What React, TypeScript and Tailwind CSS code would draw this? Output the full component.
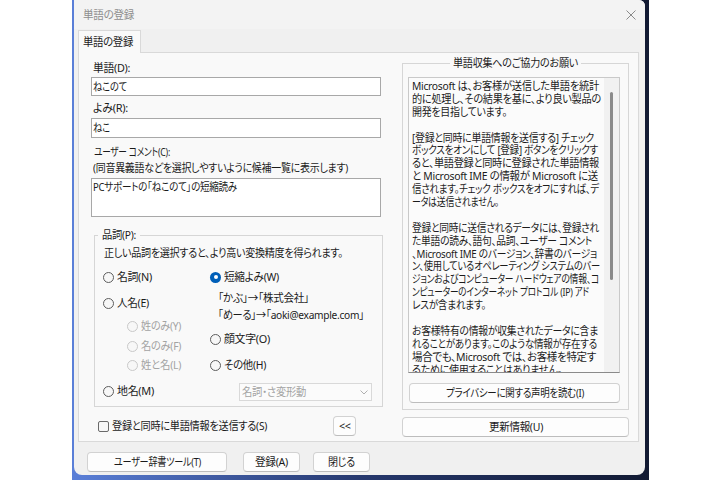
import React, { useLayoutEffect, useRef } from "react";

/* Text condensed at run time (scale computed from measurement) so that it takes
   the same width as the narrow UI font of the reference. */
function T({ w, children, className }: { w: number; children: React.ReactNode; className?: string }) {
  const inner = useRef<HTMLSpanElement>(null);
  useLayoutEffect(() => {
    const el = inner.current;
    if (!el) return;
    el.style.transform = "none";
    const nat = el.getBoundingClientRect().width;
    if (nat > 0) el.style.transform = `scaleX(${Math.min(1.08, w / nat)})`;
  }, [w]);
  return (
    <span className={"inline-block whitespace-nowrap " + (className ?? "")} style={{ width: w }}>
      <span ref={inner} className="inline-block origin-left tracking-[-0.3px]">
        {children}
      </span>
    </span>
  );
}

type RadioProps = { label: string; w: number; checked?: boolean; disabled?: boolean; className?: string };

function Radio({ label, w, checked, disabled, className }: RadioProps) {
  let circle = "w-[11px] h-[11px] rounded-full border border-[#5d5d5d] bg-[#f7f7f7] shrink-0";
  if (disabled) circle = "w-[11px] h-[11px] rounded-full border border-[#c9c9c9] bg-[#f7f7f7] shrink-0";
  if (checked) circle = "w-[11px] h-[11px] rounded-full bg-[#005fb8] shrink-0 flex items-center justify-center";
  return (
    <div className={"flex items-center h-[16px] gap-[3px] " + (className ?? "")}>
      <span className={circle}>{checked && <span className="w-[4px] h-[4px] rounded-full bg-white" />}</span>
      <T w={w} className={disabled ? "text-[#a3a3a3]" : ""}>
        {label}
      </T>
    </div>
  );
}

function Btn({ children, className }: { children: React.ReactNode; className?: string }) {
  return (
    <div
      className={
        "flex items-center justify-center h-[20px] rounded-[4px] border border-[#d2d2d2] border-b-[#bdbdbd] bg-[#fdfdfd] leading-[16px] " +
        (className ?? "")
      }
    >
      {children}
    </div>
  );
}

const infoLines: [string, number][][] = [
  [
    ["Microsoft は、お客様が送信した単語を統計", 187],
    ["的に処理し、その結果を基に、より良い製品の", 189],
    ["開発を目指しています。", 95],
  ],
  [
    ["[登録と同時に単語情報を送信する] チェック", 182],
    ["ボックスをオンにして [登録] ボタンをクリックす", 186],
    ["ると、単語登録と同時に登録された単語情報", 187],
    ["と Microsoft IME の情報が Microsoft に送", 186],
    ["信されます。チェック ボックスをオフにすれば、デ", 187],
    ["ータは送信されません。", 87],
  ],
  [
    ["登録と同時に送信されるデータには、登録され", 187],
    ["た単語の読み、語句、品詞、ユーザー コメント", 180],
    ["、Microsoft IME のバージョン、辞書のバージョ", 185],
    ["ン、使用しているオペレーティング システムのバー", 188],
    ["ジョンおよびコンピューター ハードウェアの情報、コ", 187],
    ["ンピューターのインターネット プロトコル (IP) アド", 177],
    ["レスが含まれます。", 74],
  ],
  [
    ["お客様特有の情報が収集されたデータに含ま", 186],
    ["れることがあります。このような情報が存在する", 185],
    ["場合でも、Microsoft では、お客様を特定す", 184],
    ["るために使用することはありません。", 150],
  ],
];

export default function App() {
  return (
    <div className="w-[720px] h-[480px] bg-white flex font-['Noto_Sans','Noto_Sans_CJK_JP',sans-serif] text-[11px] text-[#1b1b1b] [font-feature-settings:'palt']">
      <div className="ml-[72px] w-[577px] h-[480px] bg-gradient-to-r from-[#5a7fd8] via-[#26386e] to-[#121a33] pl-[2px]">
        <div className="w-[571px] h-[475px] bg-[#f0f0f0] rounded-b-[8px] rounded-tr-[6px] flex flex-col overflow-hidden">
          {/* Title bar */}
          <div className="h-[29px] bg-[#f3f3f3] flex items-center justify-between pl-[9px] pr-[9px] shrink-0 leading-[16px]">
            <T w={51} className="text-[#8e8e8e]">
              単語の登録
            </T>
            <svg width="10" height="10" viewBox="0 0 10 10">
              <path d="M0.5 0.5 L9.5 9.5 M9.5 0.5 L0.5 9.5" stroke="#8a8a8a" strokeWidth="1" fill="none" />
            </svg>
          </div>

          {/* Tab strip */}
          <div className="flex ml-[4px] mt-[1px]">
            <div className="relative z-10 -mb-px w-[63px] h-[23px] border border-b-0 border-[#d9d9d9] bg-[#f9f9f9] pl-[4px] pt-[3px] leading-[16px]">
              <T w={50}>単語の登録</T>
            </div>
          </div>

          {/* Panel */}
          <div className="ml-[4px] mr-[6px] h-[390px] border border-[#d9d9d9] bg-[#f9f9f9] flex leading-[16px]">
            {/* Left column */}
            <div className="ml-[12px] w-[290px] flex flex-col">
              <div className="mt-[7px] h-[16px] pl-[2px]">
                <T w={37}>単語(D):</T>
              </div>
              <div className="mt-[1px] h-[19px] border border-[#a8a8a8] bg-white flex items-center pl-[1px]">
                <T w={34}>ねこのて</T>
              </div>
              <div className="mt-[4px] h-[16px] pl-[2px]">
                <T w={35}>よみ(R):</T>
              </div>
              <div className="mt-[2px] h-[20px] border border-[#a8a8a8] bg-white flex items-center pl-[1px]">
                <T w={17}>ねこ</T>
              </div>
              <div className="mt-[6px] h-[16px] pl-[3px]">
                <T w={76}>ユーザー コメント(C):</T>
              </div>
              <div className="h-[16px] pl-[2px]">
                <T w={255}>(同音異義語などを選択しやすいように候補一覧に表示します)</T>
              </div>
              <div className="mt-[2px] h-[39px] border border-[#a8a8a8] bg-white pl-[1px]">
                <T w={144}>PCサポートの「ねこのて」の短縮読み</T>
              </div>

              {/* 品詞 group */}
              <fieldset className="mt-[10px] ml-[3px] w-[289px] border border-[#d6d6d6] pb-[5px]">
                <legend className="ml-[3px] px-[4px] h-[16px]">
                  <T w={34}>品詞(P):</T>
                </legend>
                <div className="mt-[2px] pl-[9px] h-[16px]">
                  <T w={239}>正しい品詞を選択すると、より高い変換精度を得られます。</T>
                </div>
                <div className="flex pl-[8px]">
                  <div className="w-[107px] flex flex-col">
                    <Radio className="mt-[8px]" label="名詞(N)" w={35} />
                    <Radio className="mt-[10px]" label="人名(E)" w={32} />
                    <Radio className="mt-[7px] ml-[24px]" label="姓のみ(Y)" w={40} disabled />
                    <Radio className="mt-[4px] ml-[24px]" label="名のみ(F)" w={40} disabled />
                    <Radio className="mt-[3px] ml-[24px]" label="姓と名(L)" w={40} disabled />
                    <Radio className="mt-[10px]" label="地名(M)" w={37} />
                  </div>
                  <div className="flex-1 flex flex-col">
                    <Radio className="mt-[8px]" label="短縮よみ(W)" w={55} checked />
                    <div className="mt-[5px] ml-[8px] h-[16px]">
                      <T w={91}>「かぶ」→「株式会社」</T>
                    </div>
                    <div className="mt-[1px] ml-[8px] h-[16px]">
                      <T w={146}>「めーる」→「aoki@example.com」</T>
                    </div>
                    <Radio className="mt-[8px]" label="顔文字(O)" w={46} />
                    <Radio className="mt-[10px]" label="その他(H)" w={42} />
                    <div className="mt-[10px] ml-[29px] w-[133px] h-[18px] border border-[#d9d9d9] bg-[#fbfbfb] flex items-center text-[#a3a3a3]">
                      <span className="flex-1 pl-[2px]">
                        <T w={64}>名詞・さ変形動</T>
                      </span>
                      <span className="w-[15px] h-full flex items-center justify-center">
                        <svg width="8" height="5" viewBox="0 0 8 5">
                          <path d="M0.5 0.5 L4 4 L7.5 0.5" stroke="#b0b0b0" strokeWidth="1" fill="none" />
                        </svg>
                      </span>
                    </div>
                  </div>
                </div>
              </fieldset>

              <div className="mt-[9px] h-[20px] flex items-center">
                <span className="ml-[7px] w-[11px] h-[11px] rounded-[2px] border border-[#6a6a6a] bg-[#f7f7f7] shrink-0" />
                <span className="ml-[3px]">
                  <T w={155}>登録と同時に単語情報を送信する(S)</T>
                </span>
                <Btn className="ml-auto mr-[25px] w-[23px] text-[10px]">
                  <T w={12}>&lt;&lt;</T>
                </Btn>
              </div>
            </div>

            {/* Right column */}
            <div className="ml-[21px] w-[227px] flex flex-col">
              <fieldset className="mt-[2px] border border-[#d6d6d6] pb-[6px]">
                <legend className="mx-auto px-[3px] h-[16px]">
                  <T w={125}>単語収集へのご協力のお願い</T>
                </legend>
                <div className="mt-[6px] ml-[5px] w-[212px] h-[296px] border border-[#c9c9c9] border-b-[#8a8a8a] bg-[#fbfbfb] flex">
                  <div className="flex-1 overflow-hidden pl-[3px] pt-[2px] leading-[12.9px]">
                    {infoLines.map((p, i) => (
                      <div key={i} className={i > 0 ? "mt-[12.9px]" : ""}>
                        {p.map(([l, w], j) => (
                          <div key={j} className="h-[12.9px] whitespace-nowrap">
                            <T w={w}>{l}</T>
                          </div>
                        ))}
                      </div>
                    ))}
                  </div>
                  <div className="w-[15px] bg-[#f1f1f1] flex justify-center shrink-0">
                    <div className="mt-[14px] w-[3px] h-[188px] rounded-full bg-[#8a8a8a]" />
                  </div>
                </div>
                <Btn className="mt-[10px] ml-[6px] w-[211px]">
                  <T w={138}>プライバシーに関する声明を読む(I)</T>
                </Btn>
              </fieldset>
              <Btn className="mt-[7px] w-[227px]">
                <T w={54}>更新情報(U)</T>
              </Btn>
            </div>
          </div>

          {/* Bottom buttons */}
          <div className="mt-[10px] ml-[13px] flex">
            <Btn className="w-[140px]">
              <T w={87}>ユーザー辞書ツール(T)</T>
            </Btn>
            <Btn className="ml-[16px] w-[57px]">
              <T w={33}>登録(A)</T>
            </Btn>
            <Btn className="ml-[13px] w-[57px]">
              <T w={27}>閉じる</T>
            </Btn>
          </div>
        </div>
      </div>
    </div>
  );
}
